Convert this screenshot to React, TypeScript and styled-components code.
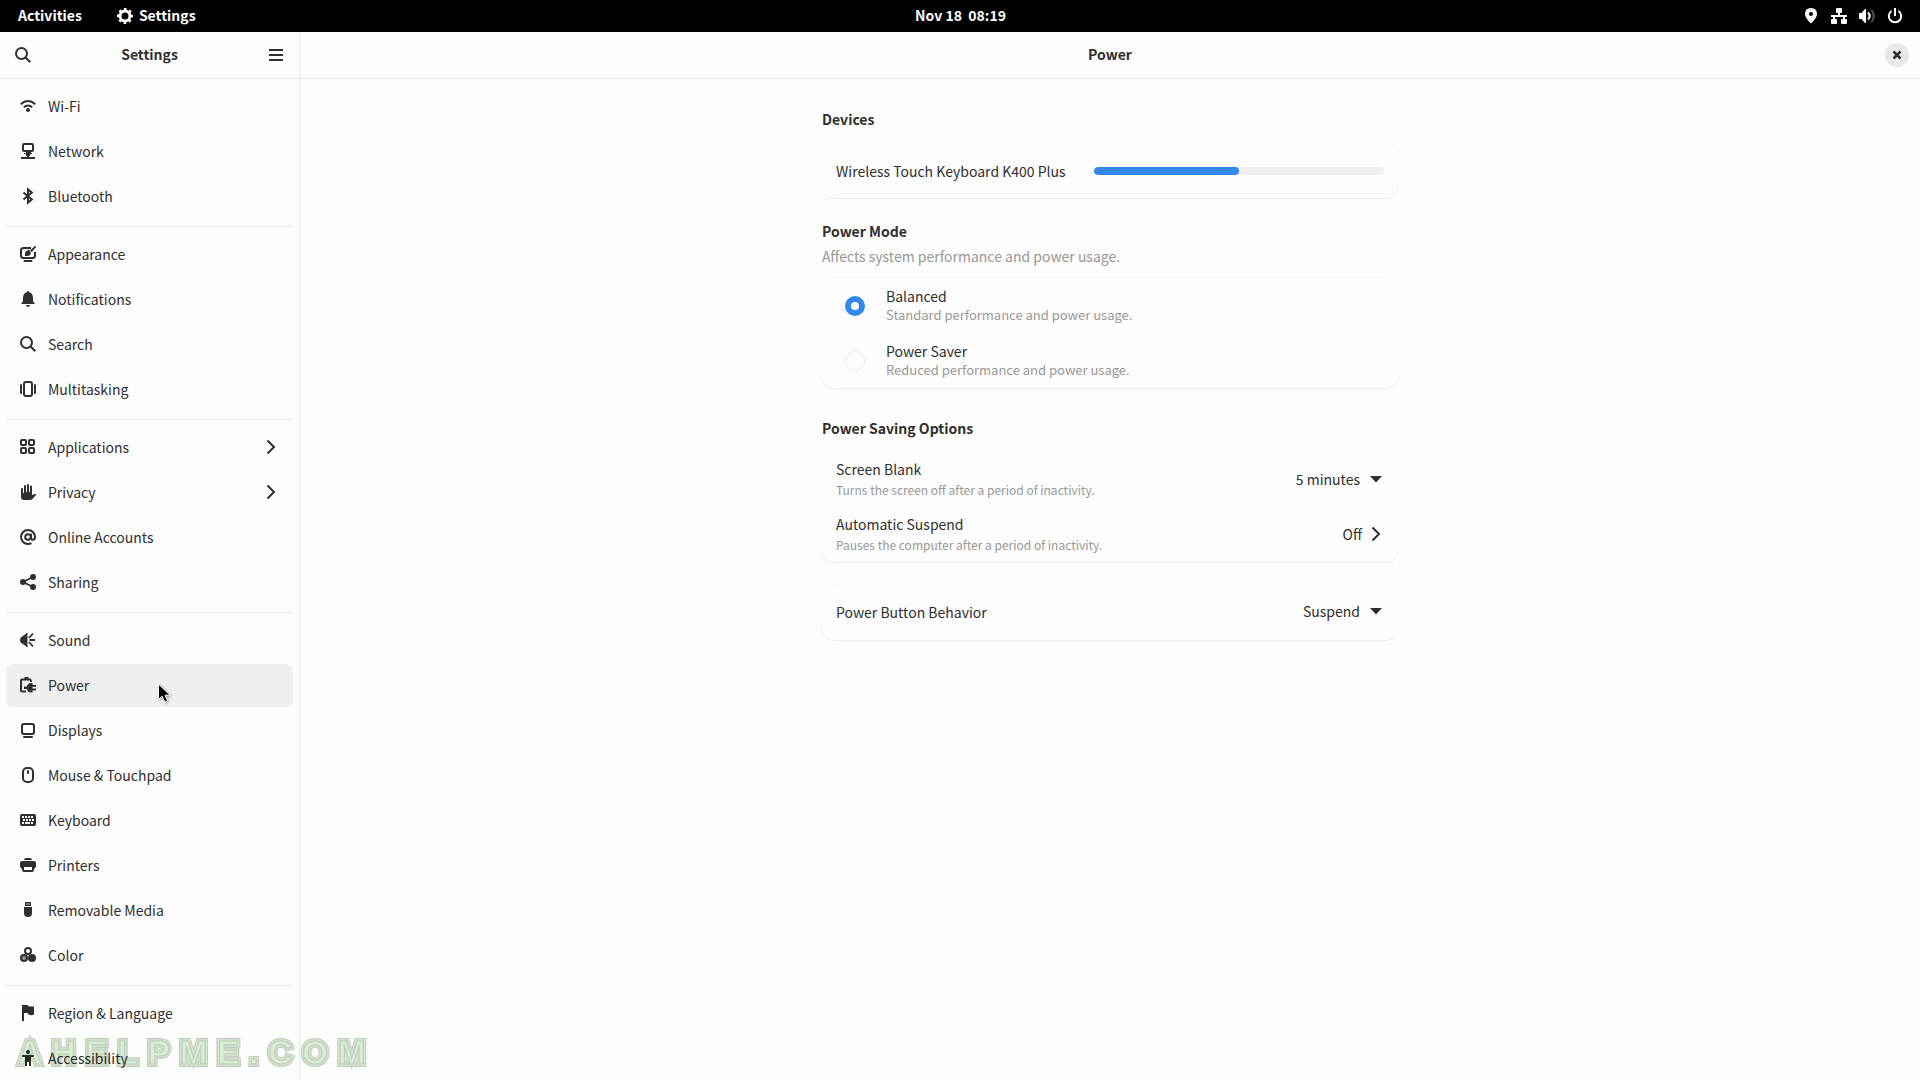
import React, { useState } from 'react';
import styled, { createGlobalStyle } from 'styled-components';

const GlobalStyle = createGlobalStyle`
  *, *::before, *::after { box-sizing: border-box; }
  body {
    margin: 0;
    background: #fdfdfd;
    color: #2f2f2f;
    font: 14px/20px "Noto Sans CJK SC", "Noto Sans", sans-serif;
    overflow: hidden;
  }
  button, select, input { font: inherit; color: inherit; }
  h1, h2, p { margin: 0; font-size: 14px; }
`;

/* ---------- icons ---------- */

const Svg = styled.svg`
  display: block;
  flex: none;
  width: 16px;
  height: 16px;
  overflow: visible;
  fill: currentColor;
`;

const Stroke = styled.g`
  fill: none;
  stroke: currentColor;
  stroke-width: 2;
`;

const icons = {
  wifi: (
    <>
      <Stroke>
        <path d="M.7 6.2Q8 -.2 15.3 6.2" />
        <path d="M3.8 9.3Q8 5.6 12.2 9.3" />
      </Stroke>
      <circle cx="8" cy="12" r="2" />
    </>
  ),
  network: (
    <>
      <path fillRule="evenodd" d="M4 0h8q2 0 2 2v5q0 2-2 2h-1v1h1v1h-2v2H9v1h6v2H1v-2h6v-1H6v-2H4v-1h2V9H4Q2 9 2 7V2q0-2 2-2zm0 2v5h8V2z" />
    </>
  ),
  bluetooth: (
    <Stroke>
      <path d="M3.5 4.5l8.3 7L8 14.6V1.4l3.8 3.1-8.3 7" />
    </Stroke>
  ),
  appearance: (
    <>
      <Stroke>
        <path d="M11 2H3.5Q1 2 1 4.5v5Q1 12 3.5 12h9q2.500 0 2.500-2.500V6" />
        <path d="M4.500 15h7" strokeLinecap="round" />
      </Stroke>
      <path d="M5 10V7.500Q5.500 4 9 4l1.500 1.500Q11.500 9.800 7.500 10z" />
      <path d="M10 4.200L15 0h1v1l-4.200 5z" />
    </>
  ),
  bell: (
    <>
      <path d="M8 0q1 0 1.300 1.200Q13 2.500 13 7v3l1.500 2v1H1.500v-1L3 10V7q0-4.500 3.700-5.800Q7 0 8 0z" />
      <path d="M6 14h4q-.3 2-2 2t-2-2z" />
    </>
  ),
  search: (
    <Stroke>
      <circle cx="6.500" cy="6.500" r="5.500" />
      <path d="M10.500 10.500l4.800 4.800" />
    </Stroke>
  ),
  multitasking: (
    <>
      <Stroke>
        <rect x="4" y="1" width="8" height="14" rx="2" />
      </Stroke>
      <path d="M0 4q0-1 2-1v10q-2 0-2-1zM16 4q0-1-2-1v10q2 0 2-1z" />
    </>
  ),
  applications: (
    <Stroke>
      <rect x="1" y="1" width="5" height="5" rx="1" />
      <rect x="9" y="1" width="5" height="5" rx="1" />
      <rect x="1" y="9" width="5" height="5" rx="1" />
      <rect x="9" y="9" width="5" height="5" rx="1" />
    </Stroke>
  ),
  privacy: (
    <path d="M1 5q0-1 1-1t1 1v4h1V2q0-1 1-1t1 1v6h1V1q0-1 1-1t1 1v7h1V2.500q0-1 1-1t1 1V11l3-1h1v1l-3.500 4q-1 1-2.500 1H4q-3 0-3-3z" />
  ),
  online: (
    <Stroke>
      <circle cx="8" cy="8" r="2.800" />
      <path d="M11 4.800V8.800q0 2 1.800 2Q15 10.800 15 8A7 7 0 1 0 8 15q2 0 3.500-.8" />
    </Stroke>
  ),
  sharing: (
    <>
      <path d="M3 8l10-5M3 8l10 5" stroke="currentColor" strokeWidth="1.800" />
      <circle cx="3" cy="8" r="3" />
      <circle cx="13" cy="3" r="3" />
      <circle cx="13" cy="13" r="3" />
    </>
  ),
  sound: (
    <>
      <path d="M6 1.500L7.500 0.500v15L3 12Q0 11 0 8t3-4z" />
      <path d="M9 6L13 1.500M9.500 8H15M9 10l4 4.500" stroke="currentColor" strokeWidth="1.800" />
    </>
  ),
  power: (
    <>
      <path d="M4 1.500L5 0h3l1 1.500h1Q12 2 12 4v1h-2V3.500H2V13.500h4v2H2q-2 0-2-2V3.500q0-2 2-2z" />
      <path d="M4 9.500h3Q7.500 6 11 6h1.500v2H16v1.800h-3.500v1.700H16v2h-3.500v2H11q-3.500 0-4-3.500H4z" />
    </>
  ),
  displays: (
    <Stroke>
      <rect x="2" y="2" width="12" height="10" rx="2" />
      <path d="M4 15h8" strokeLinecap="round" />
    </Stroke>
  ),
  mouse: (
    <>
      <Stroke>
        <rect x="3" y="1" width="10" height="14" rx="4" />
      </Stroke>
      <rect x="7" y="3" width="2" height="4" rx="1" />
    </>
  ),
  keyboard: (
    <path
      fillRule="evenodd"
      d="M2 2h12q2 0 2 2v8q0 2-2 2H2q-2 0-2-2V4q0-2 2-2zM2 4v2h2V4zm3 0v2h2V4zm3 0v2h2V4zm3 0v2h2V4zM3 7v2h2V7zm3 0v2h2V7zm3 0v2h2V7zm3 0v2h2V7zM2 10v2h2v-2zm3 0v2h5v-2zm6 0v2h2v-2z"
    />
  ),
  printers: (
    <path fillRule="evenodd" d="M4 3q0-2 2-2h4q2 0 2 2zM2 4h12q2 0 2 2v3q0 2-2 3v1q0 2-2 2H4q-2 0-2-2v-1q-2-1-2-3V6q0-2 2-2zm2 6v3h8v-3z" />
  ),
  removable: (
    <path fillRule="evenodd" d="M5 0h6v4H5zm1.500 1.200v1.500h1V1.200zm2 0v1.500h1V1.200zM4 5h8v6q0 4-4 4t-4-4z" />
  ),
  color: (
    <>
      <circle cx="8" cy="4" r="3" fill="none" stroke="currentColor" strokeWidth="2" />
      <circle cx="4" cy="11" r="3" fill="#929292" stroke="currentColor" strokeWidth="2" />
      <circle cx="12" cy="11" r="4" />
    </>
  ),
  region: <path d="M2 0h5q1 0 2 1.500h5v8q-1 .8-3 .8-2.500 0-3.500-2.300H4v8H2z" />,
  accessibility: (
    <>
      <circle cx="8" cy="2" r="2" />
      <path d="M3 5h10q1 0 1 1t-1 1h-2v9H9v-4H7v4H5V7H3Q2 7 2 6t1-1z" />
    </>
  ),
  menu: <path d="M1 2h14v2H1zM1 7h14v2H1zM1 12h14v2H1z" />,
  chevron: (
    <Stroke>
      <path d="M4.500 1.500L11 8l-6.500 6.500" />
    </Stroke>
  ),
  gear: (
    <>
      <circle cx="8" cy="8" r="5" fill="none" stroke="currentColor" strokeWidth="3" />
      <circle cx="8" cy="8" r="7" fill="none" stroke="currentColor" strokeWidth="2" strokeDasharray="2.750 2.750" strokeDashoffset="1.370" />
    </>
  ),
  location: <path fillRule="evenodd" d="M8 0q6 .2 6 6 0 4-6 9.500Q2 10 2 6q0-5.800 6-6zm0 4a2 2 0 1 0 0 4 2 2 0 0 0 0-4z" />,
  wired: <path d="M6 0h4q1 0 1 1v3q0 1-1 1H9v2h7v2h-2v2h1q1 0 1 1v3q0 1-1 1h-4q-1 0-1-1v-3q0-1 1-1h1V9H4v2h1q1 0 1 1v3q0 1-1 1H1q-1 0-1-1v-3q0-1 1-1h1V9H0V7h7V5H6Q5 5 5 4V1q0-1 1-1z" />,
  volume: (
    <>
      <path d="M6 1h1v14H6l-3.500-4H1q-1 0-1-1V6q0-1 1-1h1.500z" />
      <path d="M9 4.500q3.500 3.500 0 7" fill="none" stroke="currentColor" strokeWidth="2" />
      <path d="M12.500 2q4.500 6 0 12" fill="none" stroke="#555" strokeWidth="2" />
    </>
  ),
  shutdown: (
    <Stroke>
      <path d="M4.500 3A6.200 6.200 0 1 0 11.500 3" />
      <path d="M8 0v8" />
    </Stroke>
  ),
  close: (
    <Stroke>
      <path d="M4.500 4.500l7 7M11.500 4.500l-7 7" strokeWidth="2.500" />
    </Stroke>
  ),
  triangle: <path d="M2 5h12L8 11.500z" />,
};

type IconName = keyof typeof icons;

const Icon = ({ name }: { name: IconName }) => (
  <Svg viewBox="0 0 16 16" aria-hidden="true">
    {icons[name]}
  </Svg>
);

/* ---------- shell top bar ---------- */

const TopBar = styled.header`
  display: grid;
  grid-template-columns: 1fr auto 1fr;
  align-items: center;
  height: 32px;
  padding: 0 17px 0 18px;
  background: #000;
  color: #fff;
  font-weight: 700;
`;

const TopGroup = styled.div<{ $end?: boolean }>`
  display: flex;
  align-items: center;
  justify-content: ${(p) => (p.$end ? 'flex-end' : 'flex-start')};
  gap: ${(p) => (p.$end ? '12px' : '35px')};
`;

const PanelButton = styled.button`
  display: flex;
  align-items: center;
  gap: 6px;
  padding: 0 0 1px;
  border: 0;
  background: none;
  font-weight: 700;
  line-height: 19px;
  white-space: pre;
`;

/* ---------- window frame ---------- */

const Screen = styled.div`
  display: flex;
  flex-direction: column;
  height: 100vh;
`;

const Window = styled.div`
  flex: 1;
  display: flex;
  min-height: 0;
`;

const Sidebar = styled.aside`
  flex: none;
  display: flex;
  flex-direction: column;
  width: 300px;
  border-right: 1px solid #ebebeb;
`;

const Main = styled.main`
  flex: 1;
  min-width: 0;
`;

const HeaderBar = styled.div`
  flex: none;
  display: grid;
  grid-template-columns: 24px 1fr 24px;
  align-items: center;
  height: 47px;
  padding: 0 11px;
  border-bottom: 1px solid #e6e6e6;
`;

const Title = styled.h1`
  grid-column: 2;
  padding-bottom: 2px;
  text-align: center;
`;

const IconButton = styled.button<{ $filled?: boolean }>`
  display: flex;
  align-items: center;
  justify-content: center;
  width: 24px;
  height: 24px;
  padding: 0;
  border: 0;
  border-radius: 50%;
  background: ${(p) => (p.$filled ? '#e8e8e8' : 'none')};
`;

/* ---------- navigation ---------- */

const Nav = styled.nav`
  flex: 1;
  overflow: auto;
  padding: 0 6px;
  scrollbar-width: none;
`;

const NavGroup = styled.ul`
  display: flex;
  flex-direction: column;
  gap: 2px;
  margin: 0;
  padding: 6px 0 8px;
  list-style: none;
  & + & {
    border-top: 1px solid #ebebeb;
  }
`;

const NavLink = styled.a<{ $active: boolean }>`
  display: flex;
  align-items: center;
  gap: 12px;
  padding: 13px 14px 14px;
  border-radius: 6px;
  background: ${(p) => (p.$active ? '#efefef' : 'transparent')};
  color: inherit;
  line-height: 16px;
  text-decoration: none;
`;

const NavLabel = styled.span`
  flex: 1;
`;

/* ---------- settings page ---------- */

const Page = styled.div`
  display: flex;
  flex-direction: column;
  gap: 23px;
  max-width: 576px;
  margin: 0 auto;
  padding-top: 30px;
`;

const Section = styled.section<{ $spaced?: boolean }>`
  padding-bottom: ${(p) => (p.$spaced ? '7px' : '0')};
`;

const SectionTitle = styled.h2`
  margin-bottom: 14px;
  &:has(+ p) {
    margin-bottom: 5px;
  }
`;

const SectionNote = styled.p`
  margin-bottom: 12px;
  color: #989898;
`;

const Card = styled.div`
  border-radius: 12px;
  box-shadow: 0 0 0 1px rgba(0, 0, 0, 0.015), 0 1px 1px rgba(0, 0, 0, 0.05);
  background: #fdfdfd;
`;

const Row = styled.div<{ $raised?: boolean }>`
  display: flex;
  align-items: center;
  gap: 28px;
  height: 55px;
  padding: 0 14px ${(p) => (p.$raised ? '2px' : '0')};
`;

const RadioRow = styled(Row).attrs({ as: 'label' })`
  gap: 21px;
  padding: 0 23px;
`;

const Texts = styled.span<{ $gap: number }>`
  flex: 1;
  display: grid;
  gap: ${(p) => p.$gap}px;
  line-height: 18px;
`;

const Sub = styled.span<{ $small?: boolean }>`
  color: #989898;
  font-size: ${(p) => (p.$small ? '12px' : '13px')};
`;

const Radio = styled.input`
  appearance: none;
  width: 20px;
  height: 20px;
  margin: 0;
  border: 1px solid #e9e9e9;
  border-radius: 50%;
  &:checked {
    border: 6px solid #3388ee;
    background: #fff;
  }
`;

const Track = styled.div`
  flex: 1;
  height: 8px;
  border-radius: 4px;
  background: #efefef;
  overflow: hidden;
`;

const Fill = styled.div`
  height: 100%;
  border-radius: 4px;
  background: #3388ee;
`;

const Picker = styled.span`
  display: grid;
  grid-template-columns: 1fr 16px;
  align-items: center;
  padding-bottom: 2px;
  pointer-events: none;
`;

const Select = styled.select`
  grid-area: 1 / 1 / 2 / 3;
  appearance: none;
  width: 100px;
  padding: 0 24px 0 0;
  border: 0;
  background: none;
  text-align: right;
  text-align-last: right;
  pointer-events: auto;
`;

const PickerArrow = styled.span`
  grid-area: 1 / 2;
`;

const ValueButton = styled.button`
  display: flex;
  align-items: center;
  gap: 6px;
  padding: 0 0 2px;
  border: 0;
  background: none;
`;

/* ---------- overlays ---------- */

const Cursor = styled.svg`
  position: absolute;
  left: 157px;
  top: 683px;
  width: 15px;
  height: 21px;
  filter: drop-shadow(1px 1px 1px rgba(0, 0, 0, 0.35));
  pointer-events: none;
`;

const Watermark = styled.div`
  position: fixed;
  left: 18px;
  bottom: 11px;
  color: transparent;
  font: 700 33px/33px "Liberation Sans", Arial, sans-serif;
  letter-spacing: 10px;
  white-space: nowrap;
  mix-blend-mode: multiply;
  opacity: 0.9;
  pointer-events: none;
  -webkit-text-stroke: 6px #c0c8be;
  stroke-linejoin: round;
  &::before,
  &::after {
    content: 'AHELPME.COM' / '';
    position: absolute;
    inset: 0;
  }
  &::before {
    -webkit-text-stroke: 4px #cde3c6;
  }
  &::after {
    color: #d6ebd0;
    -webkit-text-stroke: 1px #bcc7b9;
  }
`;

type Item = { icon: IconName; label: string; sub?: boolean };

const groups: Item[][] = [
  [
    { icon: 'wifi', label: 'Wi-Fi' },
    { icon: 'network', label: 'Network' },
    { icon: 'bluetooth', label: 'Bluetooth' },
  ],
  [
    { icon: 'appearance', label: 'Appearance' },
    { icon: 'bell', label: 'Notifications' },
    { icon: 'search', label: 'Search' },
    { icon: 'multitasking', label: 'Multitasking' },
  ],
  [
    { icon: 'applications', label: 'Applications', sub: true },
    { icon: 'privacy', label: 'Privacy', sub: true },
    { icon: 'online', label: 'Online Accounts' },
    { icon: 'sharing', label: 'Sharing' },
  ],
  [
    { icon: 'sound', label: 'Sound' },
    { icon: 'power', label: 'Power' },
    { icon: 'displays', label: 'Displays' },
    { icon: 'mouse', label: 'Mouse & Touchpad' },
    { icon: 'keyboard', label: 'Keyboard' },
    { icon: 'printers', label: 'Printers' },
    { icon: 'removable', label: 'Removable Media' },
    { icon: 'color', label: 'Color' },
  ],
  [
    { icon: 'region', label: 'Region & Language' },
    { icon: 'accessibility', label: 'Accessibility' },
  ],
];

const modes = [
  { id: 'balanced', name: 'Balanced', note: 'Standard performance and power usage.' },
  { id: 'saver', name: 'Power Saver', note: 'Reduced performance and power usage.' },
];

const battery = 50;

const Dropdown = ({ id, value }: { id: string; value: string }) => (
  <Picker>
    <Select id={id} defaultValue={value}>
      <option>{value}</option>
    </Select>
    <PickerArrow>
      <Icon name="triangle" />
    </PickerArrow>
  </Picker>
);

export default function App() {
  const [active, setActive] = useState('Power');
  const [mode, setMode] = useState('balanced');

  return (
    <Screen>
      <GlobalStyle />
      <TopBar>
        <TopGroup>
          <PanelButton>Activities</PanelButton>
          <PanelButton>
            <Icon name="gear" />
            Settings
          </PanelButton>
        </TopGroup>
        <PanelButton>{'Nov 18  08:19'}</PanelButton>
        <TopGroup $end>
          <Icon name="location" />
          <Icon name="wired" />
          <Icon name="volume" />
          <Icon name="shutdown" />
        </TopGroup>
      </TopBar>

      <Window>
        <Sidebar>
          <HeaderBar>
            <IconButton aria-label="Search settings">
              <Icon name="search" />
            </IconButton>
            <Title>Settings</Title>
            <IconButton aria-label="Main menu">
              <Icon name="menu" />
            </IconButton>
          </HeaderBar>
          <Nav>
            {groups.map((group) => (
              <NavGroup key={group[0].label}>
                {group.map((item) => (
                  <li key={item.label}>
                    <NavLink href="#" $active={item.label === active} onClick={() => setActive(item.label)}>
                      <Icon name={item.icon} />
                      <NavLabel>{item.label}</NavLabel>
                      {item.sub && <Icon name="chevron" />}
                    </NavLink>
                  </li>
                ))}
              </NavGroup>
            ))}
          </Nav>
        </Sidebar>

        <Main>
          <HeaderBar>
            <Title>Power</Title>
            <IconButton $filled aria-label="Close">
              <Icon name="close" />
            </IconButton>
          </HeaderBar>
          <Page>
            <Section>
              <SectionTitle>Devices</SectionTitle>
              <Card>
                <Row>
                  <span>Wireless Touch Keyboard K400 Plus</span>
                  <Track role="progressbar" aria-valuenow={battery} aria-label="Battery level">
                    <Fill style={{ width: `${battery}%` }} />
                  </Track>
                </Row>
              </Card>
            </Section>

            <Section $spaced>
              <SectionTitle>Power Mode</SectionTitle>
              <SectionNote>Affects system performance and power usage.</SectionNote>
              <Card>
                {modes.map((m) => (
                  <RadioRow key={m.id}>
                    <Radio type="radio" name="mode" checked={mode === m.id} onChange={() => setMode(m.id)} />
                    <Texts $gap={1}>
                      <span>{m.name}</span>
                      <Sub>{m.note}</Sub>
                    </Texts>
                  </RadioRow>
                ))}
              </Card>
            </Section>

            <Section>
              <SectionTitle>Power Saving Options</SectionTitle>
              <Card>
                <Row>
                  <Texts $gap={3}>
                    <label htmlFor="blank">Screen Blank</label>
                    <Sub $small>Turns the screen off after a period of inactivity.</Sub>
                  </Texts>
                  <Dropdown id="blank" value="5 minutes" />
                </Row>
                <Row>
                  <Texts $gap={3}>
                    <span>Automatic Suspend</span>
                    <Sub $small>Pauses the computer after a period of inactivity.</Sub>
                  </Texts>
                  <ValueButton aria-label="Automatic Suspend: Off">
                    Off
                    <Icon name="chevron" />
                  </ValueButton>
                </Row>
              </Card>
            </Section>

            <Card>
              <Row $raised>
                <Texts $gap={0}>
                  <label htmlFor="button">Power Button Behavior</label>
                </Texts>
                <Dropdown id="button" value="Suspend" />
              </Row>
            </Card>
          </Page>
        </Main>
      </Window>

      <Cursor viewBox="0 0 15 21" aria-hidden="true">
        <path d="M1.500 1v15.500l3.700-3.300 2.600 6 2.800-1.200-2.600-5.800h5z" fill="#000" stroke="#fff" strokeWidth="1" />
      </Cursor>
      <Watermark>AHELPME.COM</Watermark>
    </Screen>
  );
}
